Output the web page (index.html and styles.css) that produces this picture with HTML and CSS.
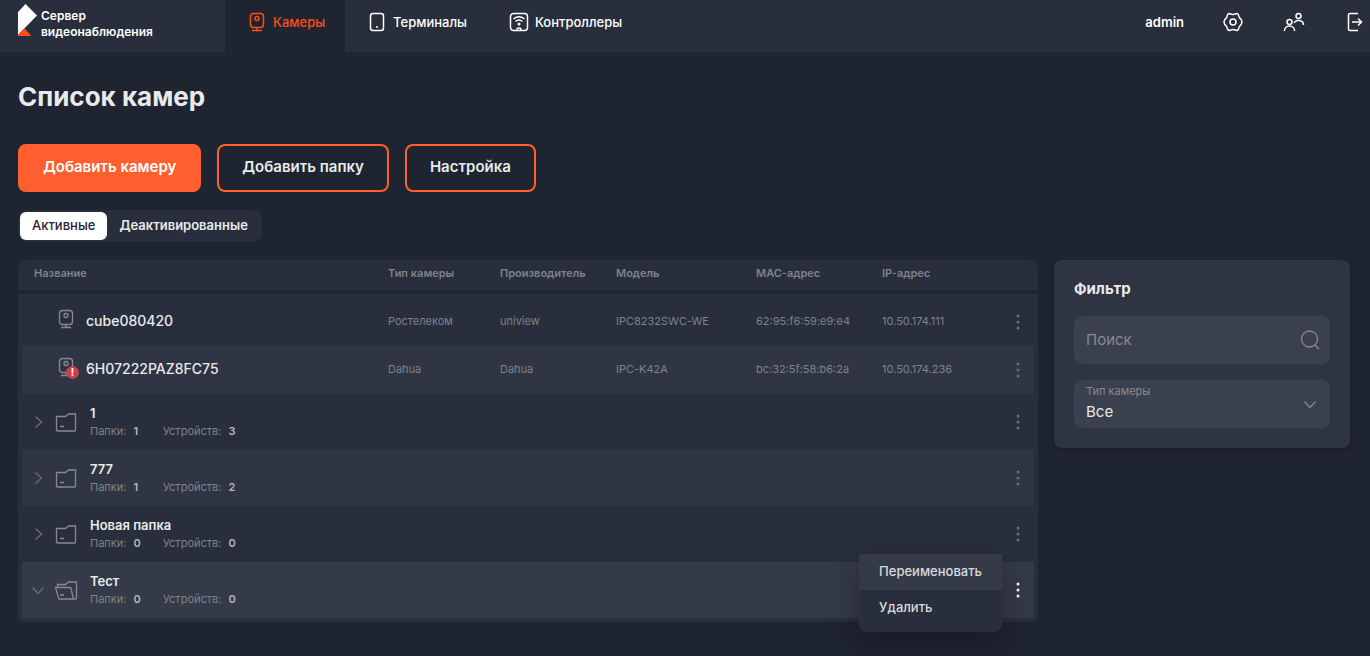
FILE: index.html
```html
<!DOCTYPE html>
<html lang="ru">

<head>
    <meta charset="UTF-8">
    <meta name="viewport" content="width=device-width, initial-scale=1.0">
    <link rel="stylesheet" href="styles.css">
    <title>Список камер</title>
</head>

<body>
    <!-- shared icons -->
    <svg class="sprite" aria-hidden="true">
        <symbol id="camera" viewBox="0 0 24 24">
            <rect x="5.5" y="3.5" width="13" height="14" rx="3"/>
            <circle cx="12" cy="8.5" r="2"/>
            <path d="M12 17.5v3M7 20.5h10"/>
        </symbol>
        <symbol id="folder" viewBox="0 0 24 24">
            <path d="M2.5 6.500h9l3-2.500h7v16a1 1 0 0 1-1 1h-17a1 1 0 0 1-1-1zM6 16.500h4"/>
        </symbol>
        <symbol id="folder-open" viewBox="0 0 24 24">
            <path d="M3.5 9.5v-3h8l3-2.500h8v16a1 1 0 0 1-1 1h-16a1 1 0 0 1-1-1l-3-10.500h14.500a1 1 0 0 1 1 1l2.500 10.500M6 17h4"/>
        </symbol>
        <symbol id="arrow-right" viewBox="0 0 24 24">
            <path d="M9.5 6.5l6 5.5-6 5.500"/>
        </symbol>
        <symbol id="arrow-down" viewBox="0 0 24 24">
            <path d="M6.5 9.5l5.5 6 5.5-6"/>
        </symbol>
        <symbol id="dots" viewBox="0 0 24 24">
            <circle cx="12" cy="6" r="1.5"/>
            <circle cx="12" cy="12" r="1.5"/>
            <circle cx="12" cy="18" r="1.5"/>
        </symbol>
    </svg>

    <header class="topbar">
        <a class="logo" href="#">
            <svg class="logo-mark" viewBox="0 0 19 32" aria-hidden="true">
                <path fill="#fff" d="M0 8L7.5 0 19 11.500 0 31z"/>
                <path fill="#ff4f12" d="M6.5 24.500l7 7.500H0v-1z"/>
            </svg>
            <span>Сервер<br>видеонаблюдения</span>
        </a>
        <nav class="nav">
            <a class="nav-item active" href="#">
                <svg class="icon"><use href="#camera"/></svg>
                Камеры
            </a>
            <a class="nav-item" href="#">
                <svg class="icon" viewBox="0 0 24 24">
                    <rect x="5.5" y="3.5" width="13" height="17" rx="2.5"/>
                    <path d="M11 17h2"/>
                </svg>
                Терминалы
            </a>
            <a class="nav-item" href="#">
                <svg class="icon" viewBox="0 0 24 24">
                    <rect x="3.5" y="3.5" width="17" height="17" rx="3"/>
                    <path d="M6.5 9q5.500-4.500 11 0M8.500 11.500q3.500-2.800 7 0M10 20.500v-1a2 1.500 0 0 1 4 0v1"/>
                    <circle class="dot" cx="12" cy="14" r="1.5"/>
                </svg>
                Контроллеры
            </a>
        </nav>
        <div class="account">
            <span class="user">admin</span>
            <button class="icon-btn" type="button" aria-label="Настройки">
                <svg class="icon" viewBox="0 0 24 24">
                    <path d="M9 3.7q3 1.400 6 0q1.800-.6 2.400 1.100q.3 3 2.900 4.900q1.400 2.300 0 4.600q-2.600 1.900-2.900 4.900q-.6 1.700-2.400 1.100q-3-1.400-6 0q-1.800.6-2.400-1.100q-.3-3-2.900-4.900q-1.400-2.300 0-4.600q2.600-1.900 2.900-4.900q.6-1.700 2.400-1.100z"/>
                    <circle cx="12" cy="12" r="3"/>
                </svg>
            </button>
            <button class="icon-btn" type="button" aria-label="Пользователи">
                <svg class="icon" viewBox="0 0 24 24">
                    <circle cx="16.5" cy="6" r="2.5"/>
                    <circle cx="7.5" cy="12" r="2.5"/>
                    <path d="M2.5 21v-.5a5 4.500 0 0 1 10 0v.5M12 13a5 4.500 0 0 1 9.500 2"/>
                </svg>
            </button>
            <button class="icon-btn" type="button" aria-label="Выйти">
                <svg class="icon" viewBox="0 0 24 24">
                    <path d="M15 3.5H7A1.500 1.500 0 0 0 5.500 5v14A1.500 1.500 0 0 0 7 20.500h8M9 12h9M15 8.500l3.500 3.500-3.500 3.500"/>
                </svg>
            </button>
        </div>
    </header>

    <main class="page">
        <h1>Список камер</h1>
        <div class="actions">
            <button class="btn primary" type="button">Добавить камеру</button>
            <button class="btn" type="button">Добавить папку</button>
            <button class="btn" type="button">Настройка</button>
        </div>
        <div class="tabs">
            <button class="tab active" type="button">Активные</button>
            <button class="tab" type="button">Деактивированные</button>
        </div>

        <div class="content">
            <table class="cameras">
                <thead>
                    <tr>
                        <th>Название</th>
                        <th>Тип камеры</th>
                        <th>Производитель</th>
                        <th>Модель</th>
                        <th>MAC-адрес</th>
                        <th>IP-адрес</th>
                        <th></th>
                    </tr>
                </thead>
                <tbody>
                    <tr class="camera">
                        <td class="name">
                            <span class="device"><svg class="icon"><use href="#camera"/></svg></span>
                            <b>cube080420</b>
                        </td>
                        <td>Ростелеком</td>
                        <td>uniview</td>
                        <td>IPC8232SWC-WE</td>
                        <td>62:95:f6:59:e9:e4</td>
                        <td>10.50.174.111</td>
                        <td class="more"><button class="icon-btn" type="button" aria-label="Меню"><svg class="icon dots"><use href="#dots"/></svg></button></td>
                    </tr>
                    <tr class="camera">
                        <td class="name">
                            <span class="device">
                                <svg class="icon"><use href="#camera"/></svg>
                                <span class="alert">!</span>
                            </span>
                            <b>6H07222PAZ8FC75</b>
                        </td>
                        <td>Dahua</td>
                        <td>Dahua</td>
                        <td>IPC-K42A</td>
                        <td>bc:32:5f:58:b6:2a</td>
                        <td>10.50.174.236</td>
                        <td class="more"><button class="icon-btn" type="button" aria-label="Меню"><svg class="icon dots"><use href="#dots"/></svg></button></td>
                    </tr>
                    <tr class="folder">
                        <td class="name" colspan="6">
                            <button class="icon-btn" type="button" aria-label="Развернуть"><svg class="icon"><use href="#arrow-right"/></svg></button>
                            <svg class="icon"><use href="#folder"/></svg>
                            <div class="info">
                                <b>1</b>
                                <p><span class="folders">Папки: <em>1</em></span><span>Устройств: <em>3</em></span></p>
                            </div>
                        </td>
                        <td class="more"><button class="icon-btn" type="button" aria-label="Меню"><svg class="icon dots"><use href="#dots"/></svg></button></td>
                    </tr>
                    <tr class="folder">
                        <td class="name" colspan="6">
                            <button class="icon-btn" type="button" aria-label="Развернуть"><svg class="icon"><use href="#arrow-right"/></svg></button>
                            <svg class="icon"><use href="#folder"/></svg>
                            <div class="info">
                                <b>777</b>
                                <p><span class="folders">Папки: <em>1</em></span><span>Устройств: <em>2</em></span></p>
                            </div>
                        </td>
                        <td class="more"><button class="icon-btn" type="button" aria-label="Меню"><svg class="icon dots"><use href="#dots"/></svg></button></td>
                    </tr>
                    <tr class="folder">
                        <td class="name" colspan="6">
                            <button class="icon-btn" type="button" aria-label="Развернуть"><svg class="icon"><use href="#arrow-right"/></svg></button>
                            <svg class="icon"><use href="#folder"/></svg>
                            <div class="info">
                                <b>Новая папка</b>
                                <p><span class="folders">Папки: <em>0</em></span><span>Устройств: <em>0</em></span></p>
                            </div>
                        </td>
                        <td class="more"><button class="icon-btn" type="button" aria-label="Меню"><svg class="icon dots"><use href="#dots"/></svg></button></td>
                    </tr>
                    <tr class="folder open">
                        <td class="name" colspan="6">
                            <button class="icon-btn" type="button" aria-label="Свернуть"><svg class="icon"><use href="#arrow-down"/></svg></button>
                            <svg class="icon"><use href="#folder-open"/></svg>
                            <div class="info">
                                <b>Тест</b>
                                <p><span class="folders">Папки: <em>0</em></span><span>Устройств: <em>0</em></span></p>
                            </div>
                        </td>
                        <td class="more">
                            <button class="icon-btn" type="button" aria-label="Меню"><svg class="icon dots"><use href="#dots"/></svg></button>
                            <div class="menu">
                                <button class="selected" type="button">Переименовать</button>
                                <button type="button">Удалить</button>
                            </div>
                        </td>
                    </tr>
                </tbody>
            </table>

            <aside class="filter">
                <h2>Фильтр</h2>
                <div class="field">
                    <input type="search" placeholder="Поиск" aria-label="Поиск">
                    <svg class="icon" viewBox="0 0 24 24">
                        <circle cx="11.5" cy="11" r="8"/>
                        <path d="M17 17l4 4"/>
                    </svg>
                </div>
                <div class="field">
                    <label for="type">Тип камеры</label>
                    <select id="type">
                        <option>Все</option>
                    </select>
                    <svg class="icon"><use href="#arrow-down"/></svg>
                </div>
            </aside>
        </div>
    </main>
</body>

</html>
```

FILE: styles.css
```css
* {
    margin: 0;
    padding: 0;
    box-sizing: border-box;
}

body {
    min-height: 100vh;
    background: #1e2430;
    color: #e9eaeb;
    font-family: Inter, "Noto Sans", sans-serif;
    font-size: 13px;
}

a {
    color: inherit;
    text-decoration: none;
}

button,
input,
select {
    border: none;
    background: none;
    color: inherit;
    font-family: inherit;
}

button {
    cursor: pointer;
}

.sprite {
    display: none;
}

.icon {
    display: block;
    flex: none;
    width: 24px;
    height: 24px;
    fill: none;
    stroke: currentColor;
    stroke-width: 1.5;
}

.dot,
.dots {
    fill: currentColor;
    stroke: none;
}

.icon-btn {
    flex: none;
    width: 24px;
    height: 24px;
}

/* top bar */

.topbar {
    display: flex;
    height: 52px;
    background: #282e3b;
    color: #fff;
    font-weight: 500;
}

.logo {
    display: flex;
    gap: 4px;
    width: 225px;
    padding: 4px 0 0 18px;
    font-size: 12px;
    font-weight: 600;
    line-height: 16px;
}

.logo span {
    padding-top: 4px;
}

.logo-mark {
    width: 19px;
    height: 32px;
}

.nav {
    display: flex;
}

.nav-item {
    display: flex;
    align-items: center;
    gap: 4px;
    padding: 0 20px 8px;
}

.nav-item.active {
    background: #1e2430;
    color: #ff4f12;
}

.account {
    display: flex;
    align-items: center;
    gap: 37px;
    margin-left: auto;
    padding: 0 3px 8px 0;
}

.user {
    font-weight: 600;
}

/* page */

.page {
    padding: 27px 20px 24px 18px;
}

h1 {
    margin-bottom: 29px;
    font-size: 26px;
    font-weight: 700;
    line-height: 36px;
}

.actions {
    display: flex;
    gap: 16px;
    margin-bottom: 18px;
}

.btn {
    height: 48px;
    padding: 0 23px 3px;
    border: 2px solid #ff5f2e;
    border-radius: 8px;
    font-size: 15px;
    font-weight: 600;
}

.btn.primary {
    background: #ff5f2e;
    color: #fff;
}

.tabs {
    display: flex;
    width: fit-content;
    margin-bottom: 18px;
    padding: 2px;
    border-radius: 8px;
    background: #282e3b;
}

.tab {
    height: 28px;
    padding: 0 12px 2px;
    border-radius: 6px;
    font-size: 13px;
    font-weight: 600;
}

.tab.active {
    background: #fff;
    color: #1e2430;
    font-weight: 500;
}

.content {
    display: flex;
    align-items: flex-start;
    gap: 16px;
}

/* table */

.cameras {
    display: block;
    flex: 1;
    color: #7e838c;
    font-size: 11px;
}

.cameras thead,
.cameras tbody {
    display: block;
    background: #282e3b;
}

.cameras thead {
    margin-bottom: 4px;
    padding: 0 4px;
    border-radius: 8px 8px 0 0;
}

.cameras tbody {
    padding: 4px;
    border-radius: 4px;
}

.cameras tr {
    display: grid;
    grid-template-columns: 1fr 112px 116px 140px 126px 120px 32px;
    align-items: center;
}

.cameras th {
    height: 30px;
    font-weight: 600;
    line-height: 26px;
    text-align: left;
}

.cameras th:first-child {
    padding-left: 12px;
}

.camera {
    height: 48px;
}

.camera td:not(.more) {
    padding-bottom: 2px;
}

.folder {
    height: 56px;
}

.cameras tbody tr:nth-child(even) {
    background: #2f3542;
}

.cameras tbody tr.open:last-child {
    background: #343a47;
}

.name {
    display: flex;
    align-items: center;
    gap: 4px;
    padding-left: 4px;
}

.folder .name {
    grid-column: span 6;
}

.name b {
    color: #e9eaeb;
    font-size: 14px;
    font-weight: 500;
    line-height: 20px;
}

.device {
    position: relative;
    margin: 0 4px 0 28px;
}

.device .icon {
    margin-bottom: 4px;
}

.alert {
    position: absolute;
    right: -1px;
    bottom: 4px;
    width: 13px;
    height: 13px;
    border-radius: 50%;
    background: #c9434b;
    color: #fff;
    font-size: 10px;
    font-weight: 700;
    line-height: 13px;
    text-align: center;
}

.info {
    padding: 0 0 2px 8px;
}

.info b {
    font-size: 13px;
    font-weight: 600;
}

.info p {
    display: flex;
    line-height: 16px;
}

.folders {
    width: 73px;
}

.info em {
    margin-left: 4px;
    color: #b4b7bc;
    font-style: normal;
    font-weight: 600;
}

.name .icon {
    color: #858a93;
    stroke-width: 1.3;
}

.name .icon-btn .icon {
    color: #696e79;
}

.more {
    position: relative;
    padding-left: 4px;
}

.more .icon-btn {
    display: block;
    color: #696e79;
}

.open .more .icon-btn {
    color: #fff;
}

.menu {
    position: absolute;
    top: -24px;
    right: 100%;
    padding-bottom: 6px;
    border-radius: 0 0 8px 8px;
    background: #282e3b;
    box-shadow: 0 8px 32px rgba(0, 0, 0, 0.3);
}

.menu button {
    display: block;
    width: 100%;
    height: 36px;
    padding: 0 20px 2px;
    color: #d9dadd;
    font-size: 13px;
    font-weight: 500;
    text-align: left;
}

.menu .selected {
    background: #343a47;
}

.menu,
.menu .selected {
    white-space: nowrap;
}

/* filter */

.filter {
    display: flex;
    flex-direction: column;
    gap: 16px;
    width: 296px;
    padding: 18px 20px 20px;
    border-radius: 8px;
    background: #2e3442;
    box-shadow: 0 2px 4px rgba(0, 0, 0, 0.2);
}

h2 {
    font-size: 15px;
    font-weight: 700;
    line-height: 22px;
}

.field {
    position: relative;
}

.field input,
.field select {
    display: block;
    width: 100%;
    height: 48px;
    padding: 0 44px 2px 12px;
    border-radius: 8px;
    background: #3a404d;
    font-size: 15px;
    appearance: none;
}

.field select {
    padding-top: 16px;
}

.field input::placeholder {
    color: #858a93;
}

.field label {
    position: absolute;
    top: 3px;
    left: 12px;
    color: #858a93;
    font-size: 11px;
    line-height: 16px;
}

.field .icon {
    position: absolute;
    top: 12px;
    right: 8px;
    color: #858a93;
    pointer-events: none;
    stroke-width: 1.3;
}
```
